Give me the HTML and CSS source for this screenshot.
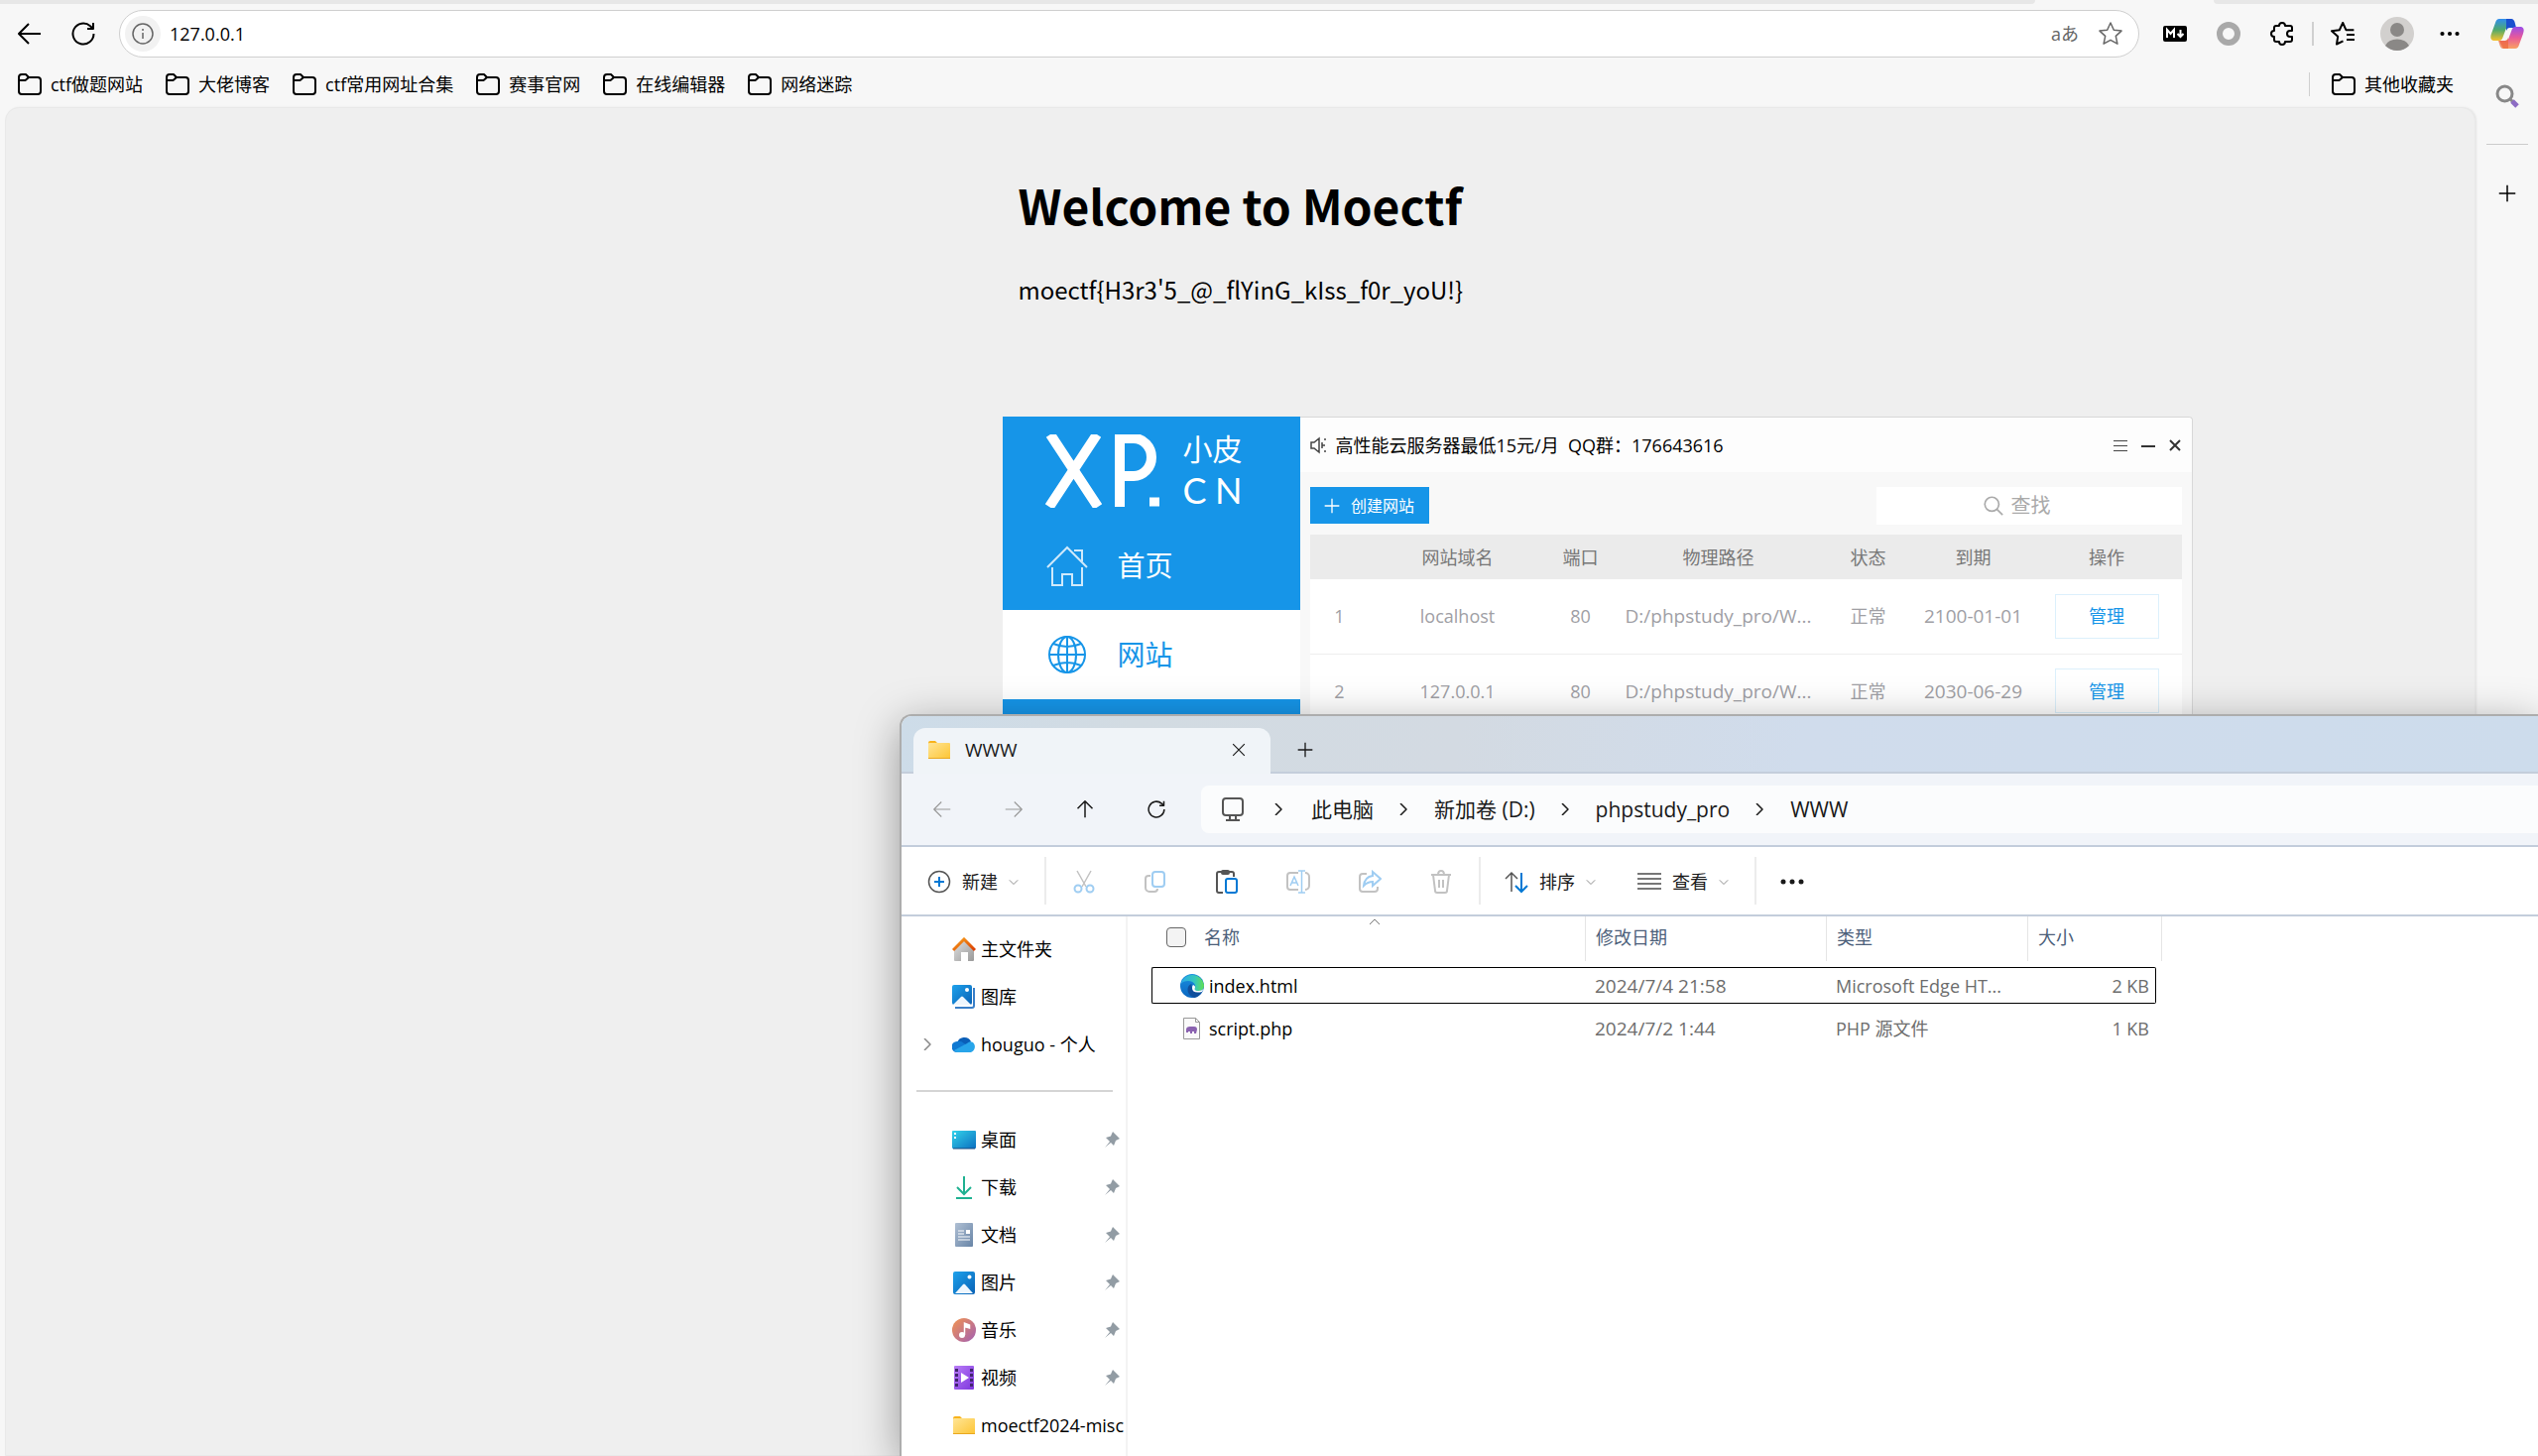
FILE: index.html
```html
<!DOCTYPE html>
<html lang="zh-CN">
<head>
<meta charset="utf-8">
<title>127.0.0.1</title>
<link rel="stylesheet" href="styles.css">
</head>
<body>
<svg class="defs" aria-hidden="true">
  <defs>
    <linearGradient id="g-folder" x1="0" y1="0" x2="1" y2="1"><stop offset="0" stop-color="#ffe596"/><stop offset="1" stop-color="#fdc534"/></linearGradient>
    <linearGradient id="g-pic" x1="0" y1="0" x2="1" y2="1"><stop offset="0" stop-color="#1ea2ec"/><stop offset="1" stop-color="#0961b5"/></linearGradient>
    <linearGradient id="g-desk" x1="0" y1="0" x2="1" y2="1"><stop offset="0" stop-color="#33d3ea"/><stop offset="1" stop-color="#0b6fc0"/></linearGradient>
    <linearGradient id="g-doc" x1="0" y1="0" x2="1" y2="1"><stop offset="0" stop-color="#b0c0d4"/><stop offset="1" stop-color="#6784a6"/></linearGradient>
    <linearGradient id="g-music" x1="0" y1="0" x2="1" y2="1"><stop offset="0" stop-color="#f3944f"/><stop offset="1" stop-color="#a25fb4"/></linearGradient>
    <linearGradient id="g-video" x1="0" y1="0" x2="1" y2="1"><stop offset="0" stop-color="#b97df7"/><stop offset="1" stop-color="#7d35dd"/></linearGradient>
    <linearGradient id="g-roof" x1="0" y1="0" x2="1" y2="1"><stop offset="0" stop-color="#f9a11b"/><stop offset="1" stop-color="#da3b01"/></linearGradient>
    <linearGradient id="g-wall" x1="0" y1="0" x2="1" y2="1"><stop offset="0" stop-color="#e2e2e2"/><stop offset="1" stop-color="#999"/></linearGradient>
    <linearGradient id="g-edge1" x1="0" y1="0" x2="1" y2="0"><stop offset="0" stop-color="#2aa9e8"/><stop offset=".6" stop-color="#35c7bd"/><stop offset="1" stop-color="#62e04f"/></linearGradient>
    <linearGradient id="g-edge2" x1="0" y1="0" x2="0" y2="1"><stop offset="0" stop-color="#1a8fe0"/><stop offset="1" stop-color="#0a66c0"/></linearGradient>
    <linearGradient id="g-cp1" x1="0" y1="0" x2="0" y2="1"><stop offset="0" stop-color="#2f8df0"/><stop offset=".5" stop-color="#4fa96c"/><stop offset="1" stop-color="#f7c22e"/></linearGradient>
    <linearGradient id="g-cp2" x1="0" y1="0" x2="0" y2="1"><stop offset="0" stop-color="#9a4dea"/><stop offset=".5" stop-color="#e95a98"/><stop offset="1" stop-color="#f9a262"/></linearGradient>
  </defs>
  <symbol id="back" viewBox="0 0 24 24"><path d="M23 12H1M11 2 1 12l10 10"/></symbol>
  <symbol id="up" viewBox="0 0 24 24"><path d="M12 23V1M2 11 12 1l10 10"/></symbol>
  <symbol id="reload" viewBox="0 0 24 24"><path d="M22.500 12a10.500 10.500 0 1 1-3.500-7.800l3 2.800M22 1v6h-6"/></symbol>
  <symbol id="info" viewBox="0 0 24 24"><circle cx="12" cy="12" r="10"/><path d="M12 11v6M12 7v2"/></symbol>
  <symbol id="star" viewBox="0 0 24 24"><path d="m12 1 3.300 7.200 7.700.9-5.700 5.300 1.600 7.800L12 18.300l-6.900 3.900 1.600-7.800L1 9.100l7.700-.9z"/></symbol>
  <symbol id="favs" viewBox="0 0 24 24"><path d="M12.500 19.300 6 22.500l1.200-7.700L1 9.200l7.800-1L12.200 1l3.200 7.200h8M16 13h8M16 18h8"/></symbol>
  <symbol id="bm" viewBox="0 0 24 24"><path d="M1 7V5a3 3 0 0 1 3-3h4l3 3h9a3 3 0 0 1 3 3v11a3 3 0 0 1-3 3H4a3 3 0 0 1-3-3zM1 8h6.500L11 5"/></symbol>
  <symbol id="puzzle" viewBox="0 0 24 24"><path d="M6 4h3a3 3 0 0 1 6 0h5a2 2 0 0 1 2 2v3h-2a3 3 0 0 0 0 6h2v3a2 2 0 0 1-2 2h-5a3 3 0 0 1-6 0H6a2 2 0 0 1-2-2v-3a3 3 0 0 1 0-6V6a2 2 0 0 1 2-2z"/></symbol>
  <symbol id="dots" viewBox="0 0 24 24"><g fill="currentColor" stroke="none"><circle cx="3" cy="12" r="2.500"/><circle cx="12" cy="12" r="2.500"/><circle cx="21" cy="12" r="2.500"/></g></symbol>
  <symbol id="plus" viewBox="0 0 24 24"><path d="M12 1v22M1 12h22"/></symbol>
  <symbol id="cross" viewBox="0 0 24 24"><path d="m2 2 20 20M22 2 2 22"/></symbol>
  <symbol id="chev" viewBox="0 0 12 12"><path d="m3 0 6 6-6 6"/></symbol>
  <symbol id="caret" viewBox="0 0 12 12"><path d="m1 4 5 5 5-5"/></symbol>
  <symbol id="glass" viewBox="0 0 24 24"><circle cx="10" cy="10" r="8.500"/><path d="m16 16 7 7"/></symbol>
  <symbol id="folder" viewBox="0 0 24 24"><path d="M1 5a2 2 0 0 1 2-2h5l2 2v5H1z" fill="#f8b31c"/><rect x="1" y="5" width="22" height="16" rx="1" fill="url(#g-folder)"/><path d="M1 20.500h22" stroke="#e9a820"/></symbol>
  <symbol id="picture" viewBox="0 0 24 24"><rect x="1" y="1" width="22" height="23" rx="2" fill="url(#g-pic)"/><path d="m3 23 8-9q1-1 2 0l8 9z" fill="#eef6fd"/><circle cx="17.500" cy="6.500" r="2" fill="#fff"/></symbol>
  <symbol id="pin" viewBox="0 0 16 16"><path d="m9 0 7 7-2 1-2 1-2 5-3-3-6 5 5-6-4-4 5-1.500L8 2z" fill="#929ca4"/></symbol>
</svg>

<div class="tabstrip"><span></span><span></span></div>
<div class="browser">
  <div class="chrome">
    <header class="toolbar">
      <button class="tb" aria-label="返回"><svg class="i24 s2"><use href="#back"/></svg></button>
      <button class="tb" aria-label="刷新"><svg class="i24 s2"><use href="#reload"/></svg></button>
      <div class="omnibox">
        <span class="site"><svg class="i24 s15"><use href="#info"/></svg></span>
        <input type="text" aria-label="地址" value="127.0.0.1">
        <span class="translate">aあ</span>
        <svg class="i24 s15"><use href="#star"/></svg>
      </div>
      <div class="exts">
        <button aria-label="Markdown"><svg class="i24" viewBox="0 0 24 24"><rect y="4" width="24" height="16" rx="2" fill="#000"/><path d="M4 16V8l3.500 4L11 8v8M17.500 8v7M14.500 12l3 3 3-3" stroke="#fff" stroke-width="2"/></svg></button>
        <button aria-label="扩展程序"><svg class="i24" viewBox="0 0 24 24"><circle cx="12" cy="12" r="9" stroke="#a9a9a9" stroke-width="6"/></svg></button>
        <button aria-label="扩展"><svg class="i24 s2"><use href="#puzzle"/></svg></button>
      </div>
      <div class="tools">
        <button aria-label="收藏夹"><svg class="i24 s2"><use href="#favs"/></svg></button>
        <button aria-label="个人资料"><svg class="i34" viewBox="0 0 34 34"><circle cx="17" cy="17" r="17" fill="#d2d0ce"/><circle cx="17" cy="13" r="7" fill="#8a8886"/><path d="M5 29a12.500 9 0 0 1 24 0 17 17 0 0 1-24 0z" fill="#8a8886"/></svg></button>
        <button aria-label="设置及其他"><svg class="i20"><use href="#dots"/></svg></button>
      </div>
    </header>
    <nav class="bookmarks">
      <a href="#"><svg class="i24 s2"><use href="#bm"/></svg>ctf做题网站</a>
      <a href="#"><svg class="i24 s2"><use href="#bm"/></svg>大佬博客</a>
      <a href="#"><svg class="i24 s2"><use href="#bm"/></svg>ctf常用网址合集</a>
      <a href="#"><svg class="i24 s2"><use href="#bm"/></svg>赛事官网</a>
      <a href="#"><svg class="i24 s2"><use href="#bm"/></svg>在线编辑器</a>
      <a href="#"><svg class="i24 s2"><use href="#bm"/></svg>网络迷踪</a>
      <a href="#" class="others"><svg class="i24 s2"><use href="#bm"/></svg>其他收藏夹</a>
    </nav>
    <main class="page">
      <div class="card">
        <h1>Welcome to Moectf</h1>
        <p>moectf{H3r3'5_@_flYinG_kIss_f0r_yoU!}</p>
        <section class="xp">
          <aside class="xp-side">
            <div class="xp-logo">
              <svg width="118" height="74" viewBox="0 0 118 74" fill="none" stroke="#fff" stroke-width="10"><path d="M6 0 54 73M53 0 5 73M76 73V4h14a18 19 0 0 1 0 38H76"/><path d="M106 68h10" stroke-width="9"/></svg>
              <div class="xp-name"><span>小皮</span><span class="cn"><span>C</span><span>N</span></span></div>
            </div>
            <a href="#" class="xp-item"><svg class="i42" viewBox="0 0 42 42" stroke="#cfe9fb" stroke-width="2"><path d="M1 23 21 3l20 20M6 23v18h10V30h10v11h10V23M28 6h8v11"/></svg>首页</a>
            <a href="#" class="xp-item on"><svg class="i42" viewBox="0 0 42 42" stroke="#1695e8" stroke-width="2"><circle cx="21" cy="21" r="18"/><ellipse cx="21" cy="21" rx="9" ry="18"/><path d="M21 3v36M3 21h36M7 10q14 6 28 0M7 32q14-6 28 0"/></svg>网站</a>
          </aside>
          <div class="xp-main">
            <div class="xp-top">
              <svg class="i18" viewBox="0 0 18 18" stroke="#444" stroke-width="1.500"><path d="M1 6h3l5-4v14l-5-4H1zM12 6v6M12 9h3M15 2v2M15 14v2"/></svg>
              <span>高性能云服务器最低15元/月&nbsp; QQ群：176643616</span>
              <div class="xp-win">
                <button aria-label="菜单"><svg class="i14" viewBox="0 0 14 14" stroke="#444"><path d="M0 2.500h14M0 7.500h14M0 12.500h14"/></svg></button>
                <button aria-label="最小化"><svg class="i14" viewBox="0 0 14 14" stroke="#333" stroke-width="2"><path d="M0 8h14"/></svg></button>
                <button aria-label="关闭"><svg class="i12" viewBox="0 0 12 12" stroke="#333" stroke-width="2"><path d="m1 1 10 10M11 1 1 11"/></svg></button>
              </div>
            </div>
            <div class="xp-bar">
              <button class="xp-new"><svg class="i16 s2"><use href="#plus"/></svg>创建网站</button>
              <label class="xp-find"><svg class="i20 s2"><use href="#glass"/></svg><input type="text" placeholder="查找" aria-label="查找"></label>
            </div>
            <table class="xp-table">
              <colgroup><col class="c1"><col class="c2"><col class="c3"><col class="c4"><col class="c5"><col class="c6"><col class="c7"></colgroup>
              <thead><tr><th></th><th>网站域名</th><th>端口</th><th>物理路径</th><th>状态</th><th>到期</th><th>操作</th></tr></thead>
              <tbody>
                <tr><td>1</td><td>localhost</td><td>80</td><td class="wide">D:/phpstudy_pro/W...</td><td>正常</td><td class="wide">2100-01-01</td><td><button>管理</button></td></tr>
                <tr><td>2</td><td>127.0.0.1</td><td>80</td><td class="wide">D:/phpstudy_pro/W...</td><td>正常</td><td class="wide">2030-06-29</td><td><button>管理</button></td></tr>
              </tbody>
            </table>
          </div>
        </section>
      </div>
    </main>
  </div>
  <aside class="rail">
    <button aria-label="Copilot"><svg class="i34" viewBox="0 0 34 30"><path d="M9 0h12l4 8h-6q-3 0-4 4l-3 8q-1 2-3 2H3q-4-1-2-7L5 4q1-4 4-4z" fill="url(#g-cp1)"/><path d="M16 0h5q3 0 4 5l1 4h-7q-2 0-3 3z" fill="#1b50cf"/><path d="M25 30H13l-4-8h6q3 0 4-4l3-8q1-2 3-2h6q4 1 2 7l-4 11q-1 4-4 4z" fill="url(#g-cp2)"/><path d="M18 30h-5q-3 0-4-5l-1-3h7q2 0 3-3z" fill="#ec6a3c" opacity=".7"/></svg></button>
    <button aria-label="搜索"><svg class="i24" viewBox="0 0 24 24"><circle cx="9.500" cy="9.500" r="7.500" stroke="#888" stroke-width="3"/><path d="m15 15 3 3" stroke="#888" stroke-width="3"/><path d="m17 17 5 5" stroke="#8d6cc4" stroke-width="5"/></svg></button>
    <hr>
    <button aria-label="自定义"><svg class="i18 s2"><use href="#plus"/></svg></button>
  </aside>
</div>

<section class="explorer">
  <div class="titlebar">
    <div class="tab"><svg class="i24"><use href="#folder"/></svg><span>WWW</span><button aria-label="关闭标签页"><svg class="i14 s2"><use href="#cross"/></svg></button></div>
    <button class="addtab" aria-label="新建标签页"><svg class="i16 s2"><use href="#plus"/></svg></button>
  </div>
  <div class="navbar">
    <div class="navbtns">
      <button aria-label="后退" disabled><svg class="i18 s15"><use href="#back"/></svg></button>
      <button aria-label="前进" disabled><svg class="i18 s15 flip"><use href="#back"/></svg></button>
      <button aria-label="向上"><svg class="i18 s2"><use href="#up"/></svg></button>
      <button aria-label="刷新"><svg class="i18 s2"><use href="#reload"/></svg></button>
    </div>
    <nav class="crumbs">
      <svg class="i24" viewBox="0 0 24 24" stroke="#555" stroke-width="2"><rect x="2" y="1" width="20" height="17" rx="3"/><path d="M9 18v4M15 18v4M5 23h14"/></svg>
      <svg class="i12 s15"><use href="#chev"/></svg><a href="#">此电脑</a>
      <svg class="i12 s15"><use href="#chev"/></svg><a href="#">新加卷 (D:)</a>
      <svg class="i12 s15"><use href="#chev"/></svg><a href="#">phpstudy_pro</a>
      <svg class="i12 s15"><use href="#chev"/></svg><a href="#">WWW</a>
    </nav>
  </div>
  <div class="commands">
    <div class="group first"><button class="cmd"><svg class="i24" viewBox="0 0 24 24" stroke="#555" stroke-width="1.500"><circle cx="12" cy="12" r="10.500"/><path d="M12 7v10M7 12h10" stroke="#0078d4" stroke-width="2"/></svg>新建<svg class="i10 thin"><use href="#caret"/></svg></button></div>
    <div class="group icons">
      <button aria-label="剪切" disabled><svg class="i24" viewBox="0 0 24 24" stroke="#c2c2c2" stroke-width="1.500"><path d="m5 1 9 16M19 1l-9 16"/><g stroke="#9fcdf2" stroke-width="2"><circle cx="6" cy="19" r="3.500"/><circle cx="18" cy="19" r="3.500"/></g></svg></button>
      <button aria-label="复制" disabled><svg class="i24" viewBox="0 0 24 24" stroke="#c2c2c2" stroke-width="2"><path d="M7 6H5a3 3 0 0 0-3 3v9a4 4 0 0 0 4 4h5a3 3 0 0 0 3-3"/><rect x="9" y="2" width="12" height="15" rx="3" stroke="#9fcdf2"/></svg></button>
      <button aria-label="粘贴"><svg class="i24" viewBox="0 0 24 24" stroke="#555" stroke-width="2"><path d="M8 23H4a2 2 0 0 1-2-2V4q0-2 2-2h13q2 0 2 2v3"/><rect x="7" y="1" width="7" height="3" rx="1"/><rect x="11" y="9" width="11" height="14" rx="2" stroke="#0078d4"/></svg></button>
      <button aria-label="重命名" disabled><svg class="i24" viewBox="0 0 24 24" stroke="#c2c2c2" stroke-width="2"><path d="M12 3H4a3 3 0 0 0-3 3v11a3 3 0 0 0 3 3h8M19 3a4 4 0 0 1 4 4v9a4 4 0 0 1-4 4"/><path d="M15.500 1v22M12 1h7M12 23h7M4 16l4-9 4 9M5.500 13h5" stroke="#9fcdf2" stroke-width="1.500"/></svg></button>
      <button aria-label="共享" disabled><svg class="i24" viewBox="0 0 24 24" stroke="#c2c2c2" stroke-width="2"><path d="M9 4H5a3 3 0 0 0-3 3v12a3 3 0 0 0 3 3h12a3 3 0 0 0 3-3v-2"/><path d="M15 2l8 7-8 7v-4q-5 0-9 4 1-9 9-10z" stroke="#9fcdf2"/></svg></button>
      <button aria-label="删除" disabled><svg class="i24" viewBox="0 0 24 24" stroke="#c2c2c2" stroke-width="2"><path d="M2 5h20M4 5l2 16q0 2 2 2h8q2 0 2-2l2-16M9 5q0-4 3-4t3 4M10 10v8M14 10v8"/></svg></button>
    </div>
    <div class="group">
      <button class="cmd"><svg class="i24" viewBox="0 0 24 24" stroke="#555" stroke-width="1.500"><path d="M7 22V3M1 9l6-6 6 6"/><path d="M17 3v19M11 16l6 6 6-6" stroke="#0078d4" stroke-width="2"/></svg>排序<svg class="i10 thin"><use href="#caret"/></svg></button>
      <button class="cmd"><svg class="i24" viewBox="0 0 24 24" stroke="#777" stroke-width="2"><path d="M0 4h24M0 9h24M0 14h24M0 19h24"/></svg>查看<svg class="i10 thin"><use href="#caret"/></svg></button>
    </div>
    <div class="group"><button aria-label="更多"><svg class="i24"><use href="#dots"/></svg></button></div>
  </div>
  <div class="body">
    <nav class="tree">
      <a href="#"><svg class="i24" viewBox="0 0 24 24"><path d="M2 11 12 2l10 9v12q0 1-1 1h-5v-9H9v9H3q-1 0-1-1z" fill="url(#g-wall)"/><path d="m1 13 11-11 11 11" stroke="url(#g-roof)" stroke-width="3"/></svg>主文件夹</a>
      <a href="#"><svg class="i24" viewBox="0 0 24 24"><path d="M22 3v18q0 2-2 2H3" stroke="#3a7fc8" stroke-width="2"/><rect width="20" height="20" rx="2" fill="url(#g-pic)"/><path d="m1 20 8-8q1-1 2 0l8 8z" fill="#eef6fd"/><circle cx="15" cy="5" r="2" fill="#fff"/></svg>图库</a>
      <a href="#"><svg class="expand i12 s15"><use href="#chev"/></svg><svg class="i24" viewBox="0 0 24 24"><path d="M5 11a7.500 7.500 0 0 1 14-2l-4 6z" fill="#0a5fb8"/><path d="M5 9q4-1 7 2l5 3-12 6a5.500 5.500 0 0 1 0-11z" fill="#1079d2"/><path d="M2 18 15 11q3-3 6-1a6 6 0 0 1-2 10H5q-2 0-3-2z" fill="#28a5ea"/></svg>houguo - 个人</a>
      <hr>
      <a href="#"><svg class="i24" viewBox="0 0 24 24"><rect y="3" width="24" height="18" rx="1" fill="url(#g-desk)"/><path d="M3 5v2M3 9v2" stroke="#fff" stroke-width="2"/><path d="M1 21h22" stroke="#17477f"/></svg>桌面<svg class="pin i16"><use href="#pin"/></svg></a>
      <a href="#"><svg class="i24" viewBox="0 0 24 24" stroke="#1fb191" stroke-width="2"><path d="M12 1v17M5 12l7 7 7-7M4 23h16"/></svg>下载<svg class="pin i16" viewBox="0 0 16 16"><use href="#pin"/></svg></a>
      <a href="#"><svg class="i24" viewBox="0 0 24 24"><rect x="3" width="18" height="24" rx="1" fill="url(#g-doc)"/><path d="M6 8h6M6 11h6M6 14h12M6 17h12" stroke="#fff"/><path d="M14 7h4v4h-4z" fill="#fff"/></svg>文档<svg class="pin i16"><use href="#pin"/></svg></a>
      <a href="#"><svg class="i24"><use href="#picture"/></svg>图片<svg class="pin i16"><use href="#pin"/></svg></a>
      <a href="#"><svg class="i24" viewBox="0 0 24 24"><circle cx="12" cy="12" r="12" fill="url(#g-music)"/><circle cx="10" cy="17" r="3" fill="#fff"/><path d="M12.500 17V5l5 2v3l-5-1.500" stroke="#fff" stroke-width="1.500" fill="#fff"/></svg>音乐<svg class="pin i16"><use href="#pin"/></svg></a>
      <a href="#"><svg class="i24" viewBox="0 0 24 24"><rect x="2" width="20" height="24" rx="1" fill="url(#g-video)"/><path d="M4.500 3v19M19.500 3v19" stroke="#41256e" stroke-width="3" stroke-dasharray="3 2"/><path d="m9 7 8 5-8 5z" fill="#fff"/></svg>视频<svg class="pin i16"><use href="#pin"/></svg></a>
      <a href="#"><svg class="i24"><use href="#folder"/></svg>moectf2024-misc</a>
    </nav>
    <div class="files">
      <table>
        <colgroup><col class="f1"><col class="f2"><col class="f3"><col class="f4"></colgroup>
        <thead><tr>
          <th><label><input type="checkbox">名称</label><svg class="sort i12 thin" viewBox="0 0 12 12"><path d="m1 8 5-5 5 5"/></svg></th>
          <th>修改日期</th><th>类型</th><th>大小</th>
        </tr></thead>
        <tbody>
          <tr class="focus"><td><a href="#"><svg class="i24" viewBox="0 0 24 24"><circle cx="12" cy="12" r="12" fill="url(#g-edge2)"/><path d="M.5 10A12 12 0 0 1 24 11q0 6-6 6-4 0-4-2 2-2 1-4-2-4-7-4-5 0-7.500 3z" fill="url(#g-edge1)"/><path d="M22 18a12 12 0 0 1-8 6Q7 21 7.500 15q.5-4 4-5-1 8 10.500 8z" fill="#104f9c"/><path d="M13 11q3 1 1.500 4 0 2 4 2 3 0 5-2l-1.500 3q-10 2-10-4 0-2 1-3z" fill="#fff"/></svg>index.html</a></td><td class="wide">2024/7/4 21:58</td><td>Microsoft Edge HT...</td><td>2 KB</td></tr>
          <tr><td><a href="#"><svg class="i24" viewBox="0 0 24 24"><path d="M3.500 1.500h12l4 4v17h-16zM15.500 1.500v4h4" fill="#fafafa" stroke="#999"/><path d="M6 13q0-3 4-3h4q3 0 3 3l-1 4h-2v-2h-2v2h-2v-2H8v1H6z" fill="#8a62b0"/></svg>script.php</a></td><td class="wide">2024/7/2 1:44</td><td>PHP 源文件</td><td>1 KB</td></tr>
        </tbody>
      </table>
    </div>
  </div>
</section>
</body>
</html>
```

FILE: styles.css
```css
* { box-sizing: border-box; }
body {
  margin: 0;
  min-height: 100vh;
  display: flex;
  flex-direction: column;
  position: relative;
  overflow: hidden;
  background: #f7f7f7;
  color: #000;
  font: 18px/24px "Open Sans", "Noto Sans CJK SC", sans-serif;
}
button, input { font: inherit; color: inherit; background: none; border: 0; padding: 0; margin: 0; }
button { display: flex; align-items: center; justify-content: center; }
input { outline: 0; min-width: 0; }
a { color: inherit; text-decoration: none; }
hr { border: 0; margin: 0; }
svg { fill: none; flex: none; display: block; }
.defs { position: absolute; width: 0; height: 0; }
.i10 { width: 10px; height: 10px; }
.i12 { width: 12px; height: 12px; }
.i14 { width: 14px; height: 14px; }
.i16 { width: 16px; height: 16px; }
.i18 { width: 18px; height: 18px; }
.i20 { width: 20px; height: 20px; }
.i24 { width: 24px; height: 24px; }
.i34 { width: 34px; height: 34px; }
.i42 { width: 42px; height: 42px; }
.s2 { stroke: currentColor; stroke-width: 2; stroke-linejoin: round; }
.s15 { stroke: currentColor; stroke-width: 1.5; stroke-linejoin: round; }
.thin { stroke: #777; stroke-width: 1; }
.flip { transform: scaleX(-1); }

/* Browser frame */
.tabstrip { display: flex; justify-content: space-between; height: 4px; }
.tabstrip span { background: #e7e7e7; width: 327px; border-bottom-left-radius: 4px; }
.tabstrip span:first-child { flex: 1; margin-right: 180px; border-radius: 0 0 4px 0; }
.browser { flex: 1; display: flex; }
.chrome { flex: 1; display: flex; flex-direction: column; min-width: 0; }
.toolbar { height: 60px; display: flex; align-items: center; padding: 0 16px; }
.tb { width: 24px; margin-left: 2px; margin-right: 30px; }
.tb + .tb { margin-right: 24px; margin-left: 0; }
.omnibox {
  flex: 1;
  height: 48px;
  display: flex;
  align-items: center;
  border: 1px solid #cfcfcf;
  border-radius: 24px;
  background: #fff;
  padding: 0 16px 0 5px;
  color: #666;
}
.omnibox input { flex: 1; color: #000; }
.site { width: 36px; height: 36px; border-radius: 50%; background: #f2f2f2; display: flex; align-items: center; justify-content: center; margin-right: 9px; }
.translate { margin-right: 20px; }
.exts { display: flex; gap: 30px; padding: 0 18px 0 24px; border-right: 2px solid #d0d0d0; height: 24px; align-items: center; }
.tools { display: flex; align-items: center; gap: 26px; padding-left: 17px; }
.bookmarks { display: flex; align-items: center; gap: 23px; height: 44px; padding: 0 22px 2px 18px; }
.bookmarks a { display: flex; align-items: center; gap: 9px; }
.bookmarks .others { margin-left: auto; border-left: 1px solid #d0d0d0; padding-left: 22px; }
.page {
  flex: 1;
  margin-left: 5px;
  background: #efefef;
  border: 1px solid #e9e9e9;
  border-radius: 14px 14px 0 0;
  box-shadow: 1px 0 2px #e4e4e4;
  padding-top: 61px;
}
.rail { width: 63px; display: flex; flex-direction: column; align-items: center; padding-top: 13px; }
.rail button:nth-child(2) { margin-top: 34px; }
.rail hr { width: 42px; height: 1px; background: #ccc; margin: 36px 0 40px; }

/* Web page */
.card { width: 480px; margin: 0 auto; padding: 0 16px; font-family: "Noto Sans CJK SC", sans-serif; }
h1 { margin: 0; font-size: 48px; line-height: 72px; white-space: nowrap; }
.card p { margin: 32px 0 0; font-size: 24px; line-height: 36px; white-space: nowrap; }
.xp { display: flex; width: 1200px; margin: 110px 0 0 -16px; font: 18px/24px "Open Sans", "Noto Sans CJK SC", sans-serif; }
.xp-side { width: 300px; background: #1695e8; color: #fff; padding-bottom: 30px; }
.xp-logo { display: flex; gap: 20px; height: 105px; padding: 18px 0 0 42px; }
.xp-logo svg { margin-right: 2px; }
.xp-name { width: 60px; margin-top: -4px; display: flex; flex-direction: column; gap: 6px; font: 30px/36px Lato, "Noto Sans CJK SC", sans-serif; }
.cn { display: flex; justify-content: space-between; font-size: 36px; }
.xp-item { display: flex; align-items: center; gap: 30px; height: 90px; padding-left: 44px; font-size: 28px; }
.xp-item.on { background: #fff; color: #1695e8; }
.xp-main { flex: 1; background: #f8f8f8; border: 1px solid #d8d8d8; border-left: 0; border-radius: 0 4px 0 0; padding-right: 10px; }
.xp-top { display: flex; align-items: center; gap: 8px; height: 55px; background: #fdfdfd; padding-left: 10px; margin-right: -10px; padding-right: 11px; border-radius: 0 4px 0 0; }
.xp-win { display: flex; align-items: center; gap: 14px; margin-left: auto; }
.xp-bar { display: flex; justify-content: space-between; margin: 15px 0 10px 10px; }
.xp-new { width: 120px; height: 37px; background: #1695e8; color: #fff; font-size: 16px; gap: 11px; }
.xp-find { width: 308px; height: 38px; background: #fff; color: #aaa; display: flex; align-items: center; justify-content: center; gap: 8px; }
.xp-find input { width: 64px; font-size: 20px; }
.xp-find input::placeholder { color: #aaa; opacity: 1; }
.xp-table { width: 879px; margin-left: 10px; table-layout: fixed; border-collapse: collapse; background: #fff; color: #a0a0a5; text-align: center; }
.xp-table th, .xp-table td { padding: 0; white-space: nowrap; }
.xp-table th { height: 45px; background: #ebebeb; color: #777; font-weight: 400; }
.xp-table td { height: 75px; border-bottom: 1px solid #eee; }
.xp-table .wide { font-size: 19px; }
.xp-table button { width: 105px; height: 45px; margin: 0 auto; border: 1px solid #dcf0fc; color: #1695e8; }
.c1 { width: 60px; }
.c2 { width: 178px; }
.c3 { width: 70px; }
.c4 { width: 208px; }
.c5 { width: 94px; }
.c6 { width: 118px; }

/* File manager window, floating over the browser */
.explorer {
  position: absolute;
  left: 907px;
  top: 720px;
  right: 0;
  bottom: 0;
  border: 2px solid #adadad;
  border-right: 0;
  border-bottom: 0;
  border-radius: 12px 0 0 0;
  background: #fff;
  box-shadow: 0 10px 44px rgba(0, 0, 0, .36);
  display: flex;
  flex-direction: column;
  color: #1a1a1a;
}
.titlebar {
  display: flex;
  align-items: flex-end;
  height: 58px;
  padding-left: 12px;
  border-radius: 10px 0 0 0;
  background: linear-gradient(100deg, #cddce9, #d2dbe2 14%, #d3dae2 34%, #d0dcec 55%, #cddcec);
  box-shadow: inset 0 -2px #c4cedb;
}
.tab { width: 360px; height: 46px; display: flex; align-items: center; padding: 0 25px 2px 14px; background: #f0f4f8; border-radius: 12px 12px 0 0; font-size: 19px; }
.tab span { margin-left: 14px; }
.tab button { margin-left: auto; }
.addtab { height: 46px; margin-left: 27px; padding-bottom: 2px; }
.navbar { display: flex; align-items: center; height: 74px; background: #f1f4f9; border-bottom: 2px solid #c3cddb; }
.navbtns { display: flex; gap: 54px; padding: 0 36px 0 32px; }
.navbtns button:disabled { color: #999; }
.crumbs { flex: 1; height: 48px; display: flex; align-items: center; background: #fbfcfd; border-radius: 8px 0 0 8px; padding-left: 20px; font-size: 21px; }
.crumbs .i12 { margin: 0 25px 0 24px; }
.crumbs .i24 + .i12 { margin-left: 28px; margin-right: 27px; }
.commands { display: flex; align-items: center; height: 70px; border-bottom: 2px solid #c3cddb; }
.group { display: flex; align-items: center; height: 48px; gap: 42px; padding: 2px 26px 0 24px; border-right: 2px solid #ececec; }
.group.first { padding-left: 26px; }
.group.icons { gap: 48px; padding: 2px 26px 0; }
.group:last-child { border: 0; }
.cmd { gap: 11px; }
.body { flex: 1; display: flex; min-height: 0; overflow: hidden; }
.tree { width: 228px; border-right: 2px solid #f3f3f3; padding-top: 9px; color: #000; overflow: hidden; }
.tree a { display: flex; align-items: center; gap: 5px; height: 48px; padding: 0 6px 0 51px; white-space: nowrap; overflow: hidden; position: relative; }
.tree hr { height: 2px; margin: 22px 13px 24px 15px; background: #d5d5d5; }
.pin { margin-left: auto; }
.expand { position: absolute; left: 20px; color: #888; }
.files { flex: 1; padding-left: 24px; }
.files table { width: 1013px; margin-top: -6px; table-layout: fixed; border-collapse: separate; border-spacing: 0 6px; color: #6d6d6d; }
.files th { position: relative; height: 45px; padding: 0 0 3px 10px; text-align: left; font-weight: 400; color: #4c607a; border-left: 1px solid #e5e5e5; }
.files th:first-child { border-left: 0; padding-left: 15px; }
.files th:last-child::after { content: ""; position: absolute; right: -6px; top: 0; bottom: 0; border-right: 1px solid #e5e5e5; }
.files label { display: flex; align-items: center; gap: 18px; }
.files input { appearance: none; width: 20px; height: 20px; border: 1px solid #666; border-radius: 4px; background: #f3f3f3; }
.sort { position: absolute; left: 50%; top: 0; }
.files td { height: 37px; padding: 0 0 0 10px; border: 1px solid transparent; border-width: 1px 0; white-space: nowrap; }
.files .wide { font-size: 19px; }
.files td:first-child { padding-left: 28px; border-left-width: 1px; color: #000; }
.files td:last-child { padding-right: 6px; text-align: right; border-right-width: 1px; }
.files td a { display: flex; align-items: center; gap: 5px; }
.focus td { border-color: #000; }
.focus td:first-child { border-radius: 2px 0 0 2px; }
.focus td:last-child { border-radius: 0 2px 2px 0; }
.f1 { width: 437px; }
.f2 { width: 243px; }
.f3 { width: 203px; }
```
